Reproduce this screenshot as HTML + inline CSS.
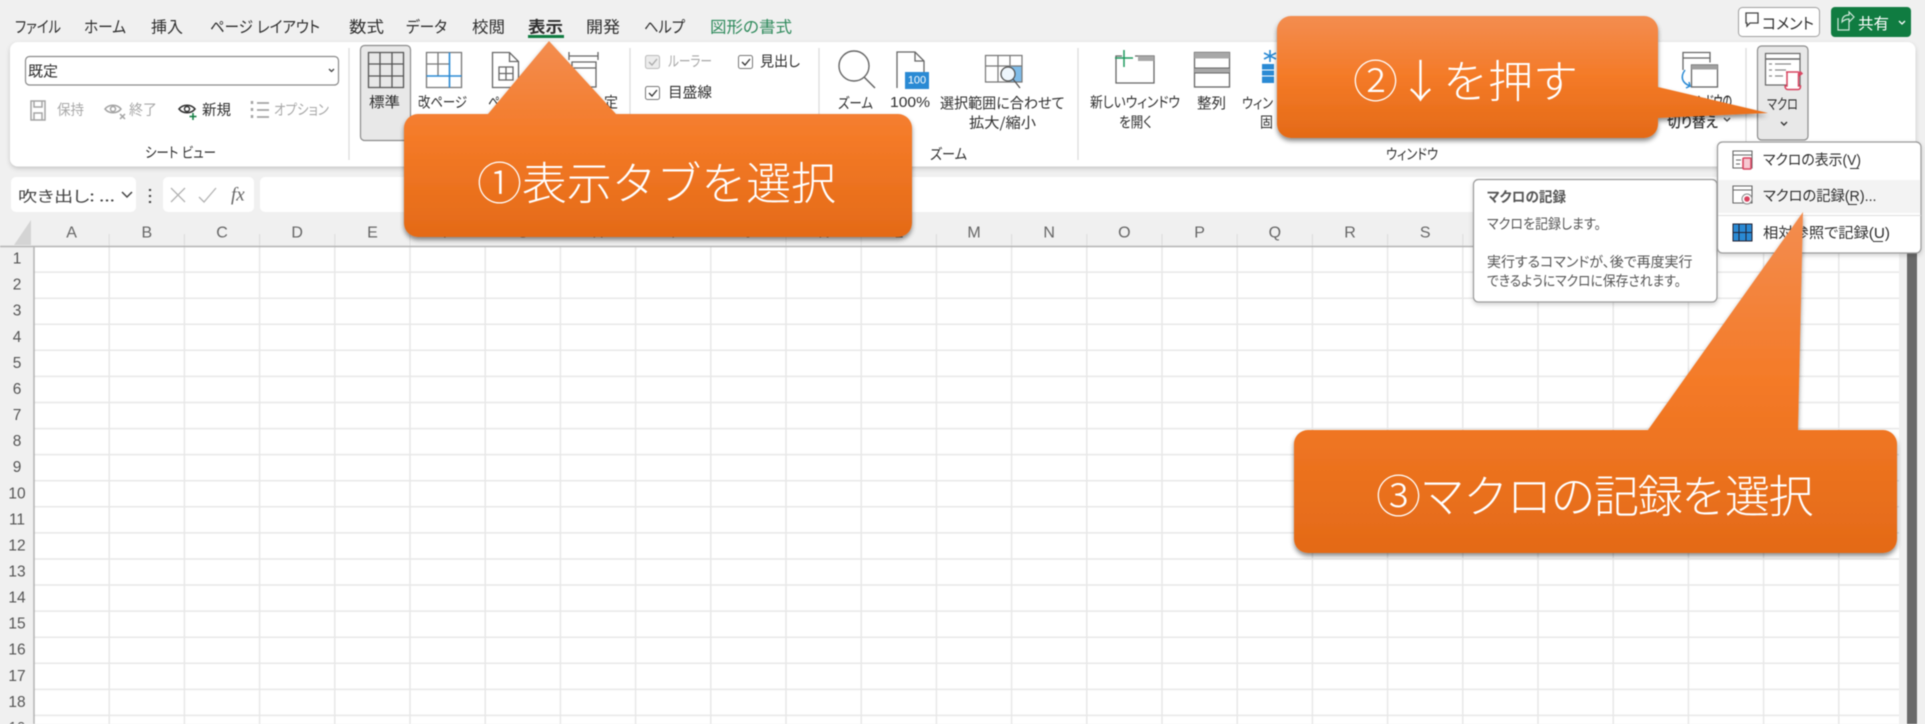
<!DOCTYPE html>
<html lang="ja"><head><meta charset="utf-8"><title>Excel マクロの記録</title>
<style>
html,body{margin:0;padding:0;width:1925px;height:724px;overflow:hidden;background:#f0f0f0}
svg{display:block;filter:blur(.45px)}
text{font-family:"Liberation Sans","Noto Sans CJK JP",sans-serif;font-feature-settings:"palt";dominant-baseline:central;fill:#2e2e2e;font-size:14.5px}
.jp{font-family:"Noto Sans CJK JP","Liberation Sans",sans-serif}
.tab{font-size:16px}
.g{fill:#a8a8a8}
.c{font-size:16px;fill:#666;text-anchor:middle}
.r{font-size:15.5px;fill:#555;text-anchor:middle}
.call{font-size:45px;fill:#fff;font-weight:300;font-family:"Noto Sans CJK JP",sans-serif;font-feature-settings:normal}
.tip{fill:#555;font-size:14px}
.ib{fill:none;stroke:#2a8ad4;stroke-width:1.6}
</style></head><body>
<svg width="1925" height="724" viewBox="0 0 1925 724" xmlns="http://www.w3.org/2000/svg">
<defs>
<linearGradient id="og" x1="0" y1="0" x2="0" y2="1"><stop offset="0" stop-color="#f38d50"/><stop offset=".5" stop-color="#f47a27"/><stop offset="1" stop-color="#e46a17"/></linearGradient>
<filter id="sh" x="-5%" y="-5%" width="110%" height="115%"><feDropShadow dx="0" dy="3" stdDeviation="2.5" flood-color="#000" flood-opacity=".45"/></filter>
<filter id="sr" x="-5%" y="-5%" width="110%" height="115%"><feDropShadow dx="0" dy="2" stdDeviation="2.5" flood-color="#000" flood-opacity=".18"/></filter>
</defs>

<rect width="1925" height="724" fill="#f0f0f0"/>

<!-- tabs -->
<g class="jp">
<text class="tab" x="15" y="28" textLength="46" lengthAdjust="spacingAndGlyphs">ファイル</text>
<text class="tab" x="84" y="28" textLength="42" lengthAdjust="spacingAndGlyphs">ホーム</text>
<text class="tab" x="151" y="28" textLength="32" lengthAdjust="spacingAndGlyphs">挿入</text>
<text class="tab" x="210" y="28" textLength="110" lengthAdjust="spacingAndGlyphs">ページ レイアウト</text>
<text class="tab" x="349" y="28" textLength="35" lengthAdjust="spacingAndGlyphs">数式</text>
<text class="tab" x="406" y="28" textLength="41" lengthAdjust="spacingAndGlyphs">データ</text>
<text class="tab" x="472" y="28" textLength="33" lengthAdjust="spacingAndGlyphs">校閲</text>
<text class="tab" x="528" y="28" textLength="35" lengthAdjust="spacingAndGlyphs" font-weight="700">表示</text>
<text class="tab" x="586" y="28" textLength="34" lengthAdjust="spacingAndGlyphs">開発</text>
<text class="tab" x="644" y="28" textLength="41" lengthAdjust="spacingAndGlyphs">ヘルプ</text>
<text class="tab" x="710" y="28" textLength="82" lengthAdjust="spacingAndGlyphs" style="fill:#2f8a5c">図形の書式</text>
</g>
<rect x="528" y="35" width="36" height="3" fill="#107c41"/>

<!-- comment / share -->
<rect x="1738.500" y="7.500" width="81" height="29" rx="4" fill="#fff" stroke="#a0a0a0"/>
<path d="M1746 13h12v10h-8l-3 3v-3h-1z" fill="none" stroke="#444" stroke-width="1.300"/>
<text class="jp" x="1762" y="23" textLength="52" lengthAdjust="spacingAndGlyphs" style="font-size:15.5px">コメント</text>
<rect x="1831" y="7" width="80" height="30" rx="4" fill="#107c41"/>
<path d="M1838 18v12h11v-8M1842 22c0-5 3-7 7-7v-3l5 5-5 5v-3c-3 0-5 1-7 3z" fill="none" stroke="#cfe7da" stroke-width="1.200"/>
<text class="jp" x="1858" y="23" textLength="31" lengthAdjust="spacingAndGlyphs" style="fill:#fff;font-size:15.5px">共有</text>
<path d="M1899 21l3 3 3-3" fill="none" stroke="#fff" stroke-width="1.300"/>

<!-- ribbon -->
<rect x="10" y="42" width="1905.500" height="124.500" rx="8" fill="#fff" filter="url(#sr)"/>
<g stroke="#dcdcdc" stroke-width="1.200">
<path d="M349 48V160M630 48V160M819 48V160M1078 48V160M1746 48V160"/>
</g>

<!-- sheet view group -->
<rect x="25.500" y="56.500" width="313" height="28.500" rx="4" fill="#fff" stroke="#8a8a8a" stroke-width="1.200"/>
<text class="jp" x="28" y="71" textLength="30" lengthAdjust="spacingAndGlyphs">既定</text>
<path d="M329 69l2.500 2.500 2.500-2.500" fill="none" stroke="#444" stroke-width="1.300"/>
<g fill="none" stroke="#a4a4a4" stroke-width="1.500">
<path d="M31 101h14v19h-14zM34 101v6h8v-6M34 120v-7h8v7"/>
<path d="M105 109c4-5 12-5 16 0c-4 5-12 5-16 0z"/><circle cx="113" cy="109" r="2.500"/><path d="M120 114l5 5M125 114l-5 5"/>
<path d="M252 101v3M252 108v3M252 115v3" stroke-width="2.400"/><path d="M257 103h12M257 110h12M257 117h12" stroke-width="1.700"/>
</g>
<path d="M179 109c4-5 12-5 16 0c-4 5-12 5-16 0z" fill="none" stroke="#333" stroke-width="1.600"/><circle cx="187" cy="109" r="2.500" fill="none" stroke="#333" stroke-width="1.400"/>
<path d="M193 113v7M189.500 116.500h7" stroke="#107c41" stroke-width="1.500"/>
<g class="jp">
<text class="g" x="57" y="111" textLength="27" lengthAdjust="spacingAndGlyphs">保持</text>
<text class="g" x="129" y="111" textLength="28" lengthAdjust="spacingAndGlyphs">終了</text>
<text x="202" y="111" textLength="29" lengthAdjust="spacingAndGlyphs">新規</text>
<text class="g" x="274" y="111" textLength="55" lengthAdjust="spacingAndGlyphs">オプション</text>
<text x="145" y="154" textLength="71" lengthAdjust="spacingAndGlyphs">シート ビュー</text>
</g>

<!-- workbook view -->
<rect x="360.500" y="45.500" width="50" height="95" rx="4" fill="#e8e8e8" stroke="#8c8c8c" stroke-width="1.200"/>
<path d="M368.500 52.500h35v35h-35zM368.500 64h35M368.500 76h35M380 52.500v35M392 52.500v35" fill="none" stroke="#555" stroke-width="1.300"/>
<text class="jp" x="369" y="102" textLength="31" lengthAdjust="spacingAndGlyphs">標準</text>
<path d="M426.500 52.500h35v35h-35zM438 52.500v24M426.500 64h23" fill="none" stroke="#777" stroke-width="1.300"/>
<path d="M449.500 52.500v35M426.500 76h35" class="ib"/>
<text class="jp" x="418" y="102" textLength="49" lengthAdjust="spacingAndGlyphs">改ページ</text>
<path d="M492.500 52.500h17l9 9v26h-26zM509.500 52.500v9h9M499 67h14v13h-14zM499 73.500h14M506 67v13" fill="none" stroke="#666" stroke-width="1.300"/>
<text class="jp" x="488" y="102" textLength="12" lengthAdjust="spacingAndGlyphs">ペ</text>
<path d="M569 56h29M569 52v8M598 52v8M572 62h24v25h-24zM572 68h24" fill="none" stroke="#666" stroke-width="1.300"/>
<text class="jp" x="604" y="102" textLength="14" lengthAdjust="spacingAndGlyphs">定</text>

<!-- show group -->
<rect x="645.500" y="55.500" width="14" height="13" rx="2" fill="#ececec" stroke="#bbb"/>
<path d="M649 62l3 3 5-6" fill="none" stroke="#aaa" stroke-width="1.300"/>
<text class="jp g" x="668" y="61" textLength="44" lengthAdjust="spacingAndGlyphs">ルーラー</text>
<rect x="738.500" y="55.500" width="14" height="13" rx="2" fill="#fff" stroke="#777"/>
<path d="M742 62l3 3 5-6" fill="none" stroke="#333" stroke-width="1.300"/>
<text class="jp" x="760" y="61" textLength="40" lengthAdjust="spacingAndGlyphs">見出し</text>
<rect x="645.500" y="86.500" width="14" height="13" rx="2" fill="#fff" stroke="#777"/>
<path d="M649 93l3 3 5-6" fill="none" stroke="#333" stroke-width="1.300"/>
<text class="jp" x="668" y="92" textLength="44" lengthAdjust="spacingAndGlyphs">目盛線</text>

<!-- zoom group -->
<circle cx="854" cy="66" r="15" fill="none" stroke="#666" stroke-width="1.400"/>
<path d="M864 77l11 11" stroke="#666" stroke-width="1.500"/>
<text class="jp" x="838" y="103" textLength="35" lengthAdjust="spacingAndGlyphs">ズーム</text>
<path d="M897 88V52h18l9 9v12M915 52v9h9" fill="none" stroke="#666" stroke-width="1.300"/>
<rect x="905" y="72" width="24" height="17" fill="#2a8ad4"/>
<text x="917" y="80.500" text-anchor="middle" style="font-size:11px;fill:#fff">100</text>
<text x="890" y="103" textLength="40" lengthAdjust="spacingAndGlyphs">100%</text>
<rect x="1007" y="66" width="15" height="16" fill="#7fbce8"/>
<path d="M985.500 55.500h36.500v26.500h-36.500zM985.500 66h36.500M998 55.500v26.500M1010 55.500v10.500" fill="none" stroke="#777" stroke-width="1.200"/>
<circle cx="1008" cy="74" r="7" fill="#eef6fc" stroke="#555" stroke-width="1.300"/>
<path d="M1013 79l7 9" stroke="#555" stroke-width="1.300"/>
<text class="jp" x="940" y="103" textLength="124.500" lengthAdjust="spacingAndGlyphs">選択範囲に合わせて</text>
<text class="jp" x="969" y="122.500" textLength="67" lengthAdjust="spacingAndGlyphs">拡大/縮小</text>
<text class="jp" x="930" y="154" textLength="37" lengthAdjust="spacingAndGlyphs">ズーム</text>

<!-- window group -->
<path d="M1122 56h-6v27h38V56h-19" fill="none" stroke="#666" stroke-width="1.300"/>
<rect x="1138" y="56" width="16" height="5" fill="#a8a8a8"/>
<path d="M1124 50v17M1115 58h18" stroke="#1f9a5f" stroke-width="1.500"/>
<text class="jp" x="1090" y="102" textLength="90" lengthAdjust="spacingAndGlyphs">新しいウィンドウ</text>
<text class="jp" x="1119" y="122" textLength="33" lengthAdjust="spacingAndGlyphs">を開く</text>
<rect x="1194.500" y="52.500" width="35" height="34.500" fill="none" stroke="#666" stroke-width="1.300"/>
<rect x="1194.500" y="52.500" width="35" height="6" fill="#a8a8a8"/>
<rect x="1194.500" y="68" width="35" height="5" fill="#a8a8a8"/>
<path d="M1194.500 68h35M1194.500 73h35" stroke="#666"/>
<text class="jp" x="1197" y="103" textLength="29" lengthAdjust="spacingAndGlyphs">整列</text>
<path d="M1270 50v12M1264 53l12 6M1276 53l-12 6" stroke="#2a8ad4" stroke-width="1.600"/>
<rect x="1262" y="64" width="12" height="19" fill="#2a8ad4"/>
<path d="M1262 70h12M1262 76h12" stroke="#fff"/>
<text class="jp" x="1242" y="103" textLength="31" lengthAdjust="spacingAndGlyphs">ウィン</text>
<text class="jp" x="1260" y="122" textLength="13" lengthAdjust="spacingAndGlyphs">固</text>
<path d="M1683 70V52.500h27v10M1683 58h27" fill="none" stroke="#666" stroke-width="1.300"/>
<rect x="1691.500" y="65" width="26" height="22" fill="#fff" stroke="#666" stroke-width="1.300"/>
<rect x="1691.500" y="65" width="26" height="4.500" fill="#a0a0a0"/>
<path d="M1685 70c-5 7-3 13 5 16l-1-4M1690 86l-4 2" fill="none" stroke="#2a8ad4" stroke-width="1.500"/>
<text class="jp" x="1697" y="101" textLength="35" lengthAdjust="spacingAndGlyphs" font-weight="500">ンドウの</text>
<text class="jp" x="1667" y="122" textLength="51" lengthAdjust="spacingAndGlyphs" font-weight="500">切り替え</text>
<path d="M1724 118l3 3 3-3" fill="none" stroke="#444" stroke-width="1.300"/>
<text class="jp" x="1386" y="154" textLength="52" lengthAdjust="spacingAndGlyphs">ウィンドウ</text>

<!-- macro button -->
<rect x="1757.500" y="46" width="50.500" height="94" rx="4" fill="#e8e8e8" stroke="#8c8c8c" stroke-width="1.200"/>
<rect x="1765.500" y="53.500" width="34.500" height="31.500" fill="#fff" stroke="#666" stroke-width="1.200"/>
<path d="M1765.500 59h34.500" stroke="#666" stroke-width="1.600"/>
<path d="M1769 64h3M1775 64h16M1769 70h3M1775 70h11M1769 76h3M1775 76h8" stroke="#8a8a8a" stroke-width="1.200"/>
<path d="M1786 72h12c1.500 0 2 1 2 3v0l2-1.500-2-2M1787 72v14h-2c0 2 1 3.500 3 3.500h10c2 0 2.500-1.500 2.500-3.500h-2V73" fill="#fff" stroke="#d8435f" stroke-width="1.500"/>
<text class="jp" x="1767" y="104" textLength="31" lengthAdjust="spacingAndGlyphs">マクロ</text>
<path d="M1781 122l3 3 3-3" fill="none" stroke="#333" stroke-width="1.400"/>

<!-- formula bar -->
<rect x="11" y="177" width="125" height="35" rx="5" fill="#fff"/>
<text class="jp" x="18" y="196" textLength="97" lengthAdjust="spacingAndGlyphs" style="font-size:15px;fill:#444">吹き出し: ...</text>
<path d="M122 192l5 5 5-5" fill="none" stroke="#444" stroke-width="1.500"/>
<path d="M150 189v2M150 195v2M150 201v2" stroke="#444" stroke-width="2.200"/>
<rect x="163" y="177" width="91" height="35" rx="5" fill="#fff"/>
<path d="M171 188l14 14M185 188l-14 14M199 197l5 5 12-14" fill="none" stroke="#b4b4b4" stroke-width="1.300"/>
<text x="231" y="195" style="font-family:'Liberation Serif',serif;font-style:italic;font-size:19px;fill:#666">fx</text>
<rect x="260" y="177" width="1655" height="35" rx="5" fill="#fff"/>

<!-- sheet -->
<rect x="34" y="246" width="1865" height="478" fill="#fff"/>
<path fill="none" stroke="#e8e8e8" stroke-width="1.500" d="M109.200 246V724M184.400 246V724M259.600 246V724M334.800 246V724M410 246V724M485.200 246V724M560.400 246V724M635.600 246V724M710.800 246V724M786 246V724M861.200 246V724M936.400 246V724M1011.600 246V724M1086.800 246V724M1162 246V724M1237.200 246V724M1312.400 246V724M1387.600 246V724M1462.800 246V724M1538 246V724M1613.200 246V724M1688.400 246V724M1763.600 246V724M1838.800 246V724
M34 272.100H1899M34 298.200H1899M34 324.200H1899M34 350.300H1899M34 376.400H1899M34 402.500H1899M34 428.600H1899M34 454.600H1899M34 480.700H1899M34 506.800H1899M34 532.900H1899M34 559H1899M34 585H1899M34 611.100H1899M34 637.200H1899M34 663.300H1899M34 689.400H1899M34 715.400H1899"/>
<path fill="none" stroke="#dcdcdc" d="M109.200 234V246M184.400 234V246M259.600 234V246M334.800 234V246M410 234V246M786 234V246M861.200 234V246M936.400 234V246M1011.600 234V246M1086.800 234V246M1162 234V246M1237.200 234V246M1312.400 234V246M1387.600 234V246M1462.800 234V246M1538 234V246M1613.200 234V246M1688.400 234V246M1763.600 234V246M1838.800 234V246"/>
<path d="M0 246.500H1899M34 246V724" stroke="#b4b4b4" stroke-width="1.500" fill="none"/>
<path d="M31 220V245H14z" fill="#d4d4d4"/>
<rect x="1899" y="246" width="8" height="478" fill="#f0f0f0"/>
<rect x="1907" y="246" width="10" height="478" fill="#696969"/>
<g>
<text class="c" x="71.600" y="233">A</text><text class="c" x="146.800" y="233">B</text><text class="c" x="222" y="233">C</text><text class="c" x="297.200" y="233">D</text><text class="c" x="372.400" y="233">E</text><text class="c" x="447.600" y="233">F</text><text class="c" x="522.800" y="233">G</text><text class="c" x="598" y="233">H</text><text class="c" x="673.200" y="233">I</text><text class="c" x="748.400" y="233">J</text><text class="c" x="823.600" y="233">K</text><text class="c" x="898.800" y="233">L</text><text class="c" x="974" y="233">M</text><text class="c" x="1049.200" y="233">N</text><text class="c" x="1124.400" y="233">O</text><text class="c" x="1199.600" y="233">P</text><text class="c" x="1274.800" y="233">Q</text><text class="c" x="1350" y="233">R</text><text class="c" x="1425.200" y="233">S</text><text class="c" x="1500.400" y="233">T</text><text class="c" x="1575.600" y="233">U</text><text class="c" x="1650.800" y="233">V</text><text class="c" x="1726" y="233">W</text><text class="c" x="1801.200" y="233">X</text><text class="c" x="1869" y="233">Y</text>
</g>
<g>
<text class="r" x="17" y="259">1</text><text class="r" x="17" y="285.200">2</text><text class="r" x="17" y="311.200">3</text><text class="r" x="17" y="337.300">4</text><text class="r" x="17" y="363.400">5</text><text class="r" x="17" y="389.500">6</text><text class="r" x="17" y="415.500">7</text><text class="r" x="17" y="441.600">8</text><text class="r" x="17" y="467.700">9</text><text class="r" x="17" y="493.800">10</text><text class="r" x="17" y="519.900">11</text><text class="r" x="17" y="545.900">12</text><text class="r" x="17" y="572">13</text><text class="r" x="17" y="598.100">14</text><text class="r" x="17" y="624.200">15</text><text class="r" x="17" y="650.200">16</text><text class="r" x="17" y="676.300">17</text><text class="r" x="17" y="702.400">18</text><text class="r" x="17" y="728.500">19</text>
</g>

<!-- tooltip -->
<rect x="1473.500" y="179.500" width="243.500" height="122.500" rx="5" fill="#fff" stroke="#9a9a9a" stroke-width="1.200" filter="url(#sr)"/>
<g class="jp">
<text class="tip" x="1487" y="197" textLength="79" lengthAdjust="spacingAndGlyphs" font-weight="700">マクロの記録</text>
<text class="tip" x="1487" y="224" textLength="114" lengthAdjust="spacingAndGlyphs">マクロを記録します。</text>
<text class="tip" x="1487" y="262" textLength="205.500" lengthAdjust="spacingAndGlyphs">実行するコマンドが、後で再度実行</text>
<text class="tip" x="1487" y="281" textLength="194" lengthAdjust="spacingAndGlyphs">できるようにマクロに保存されます。</text>
</g>

<!-- macro menu -->
<rect x="1717.500" y="142" width="203.500" height="111" rx="5" fill="#fff" stroke="#9a9a9a" stroke-width="1.200" filter="url(#sr)"/>
<rect x="1718.500" y="180" width="201.500" height="33" fill="#f3f3f3"/>
<path d="M1718 215.500H1921" stroke="#dedede"/>
<path d="M1733 151h19v17h-19zM1733 155h19M1736 160h5M1736 164h4" fill="#fff" stroke="#666" stroke-width="1.100"/>
<rect x="1743" y="158" width="8" height="11" rx="1" fill="#f7c9d2" stroke="#d8435f" stroke-width="1.600"/>
<path d="M1733 186h19v17h-19zM1733 190h19" fill="#fff" stroke="#666" stroke-width="1.100"/>
<circle cx="1747" cy="199" r="5" fill="#fff" stroke="#888"/><circle cx="1747" cy="199" r="2.800" fill="#d8435f"/>
<rect x="1733" y="224" width="19" height="17" fill="#2a8ad4"/>
<path d="M1733 224h19v17h-19zM1733 232.500h19M1739 224v17M1746 224v17" fill="none" stroke="#223"/>
<g class="jp">
<text x="1763" y="161" textLength="98" lengthAdjust="spacingAndGlyphs">マクロの表示(V)</text>
<text x="1763" y="197" textLength="113.500" lengthAdjust="spacingAndGlyphs">マクロの記録(R)...</text>
<text x="1763" y="234" textLength="127" lengthAdjust="spacingAndGlyphs">相対参照で記録(U)</text>
</g>
<path d="M1850 168.500h9M1848 204.500h9M1873 241.500h10" stroke="#333" stroke-width="1"/>

<!-- callouts -->
<path filter="url(#sh)" fill="url(#og)" d="M549 41L616 114H898a14 14 0 0 1 14 14V223a14 14 0 0 1-14 14H418a14 14 0 0 1-14-14V128a14 14 0 0 1 14-14H488Z"/>
<text class="call" x="477" y="180" textLength="359">①表示タブを選択</text>

<path filter="url(#sh)" fill="url(#og)" d="M1291 16H1644a14 14 0 0 1 14 14V87L1768 113L1658 118V124a14 14 0 0 1-14 14H1291a14 14 0 0 1-14-14V30a14 14 0 0 1 14-14Z"/>
<text class="call" x="1353" y="78" textLength="225">②↓を押す</text>

<path filter="url(#sh)" fill="url(#og)" d="M1803 212L1798 430H1883a14 14 0 0 1 14 14V539a14 14 0 0 1-14 14H1308a14 14 0 0 1-14-14V444a14 14 0 0 1 14-14H1648Z"/>
<text class="call" x="1376" y="493" textLength="437.500">③マクロの記録を選択</text>
</svg>
</body></html>
